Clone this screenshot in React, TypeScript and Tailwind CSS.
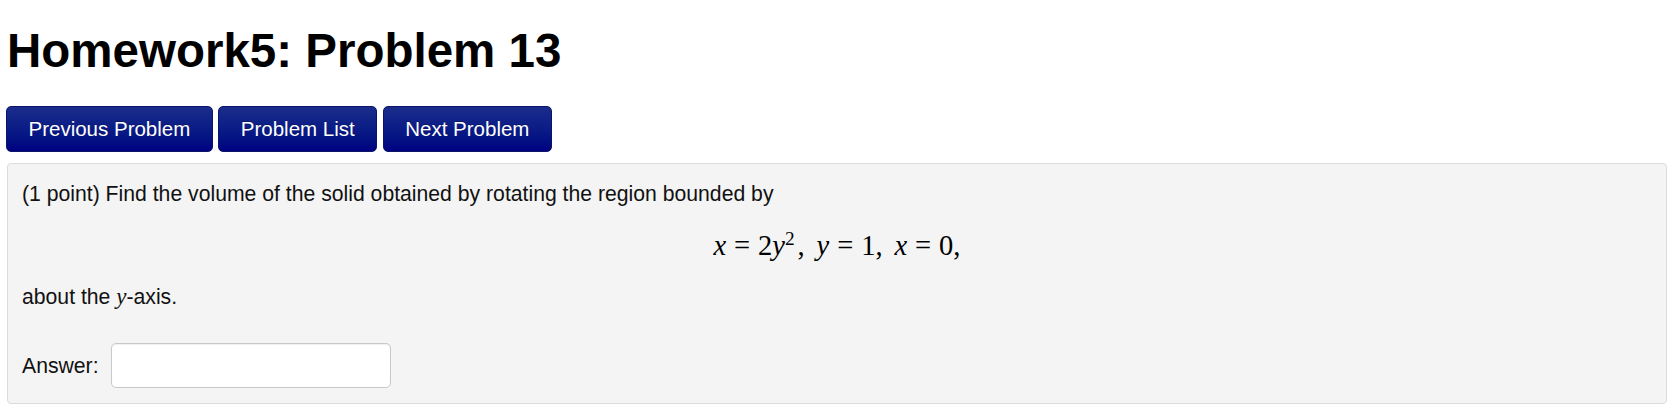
export default function App() {
  const btn =
    "h-[46px] px-[21.5px] rounded-[5px] border border-[#0b1466] bg-gradient-to-b from-[#1b2c8c] to-[#000080] text-white text-[20.5px] leading-none [text-shadow:0_-1px_0_rgba(0,0,0,0.25)]";

  return (
    <div className="min-h-screen bg-white text-[#111] font-['Liberation_Sans',Arial,sans-serif]">
      <h1 className="ml-[7px] pt-[27px] text-[47.5px] leading-[48px] font-bold text-black">
        Homework5: Problem 13
      </h1>

      <div className="ml-[6px] mt-[31px] flex gap-[5.5px]">
        <button className={btn}>Previous Problem</button>
        <button className={btn}>Problem List</button>
        <button className={btn}>Next Problem</button>
      </div>

      {/* problem body */}
      <div className="ml-[7px] mr-[9px] mt-[11px] rounded-[4px] border border-[#dcdcdc] bg-[#f4f4f4] px-[14px] pt-[15px] pb-[15px] text-[21.2px]">
        <p className="leading-[30px]">
          (1 point) Find the volume of the solid obtained by rotating the region bounded by
        </p>

        <div className="mt-[19px] flex justify-center font-['Liberation_Serif',serif] text-[28.5px] leading-[36px] text-black">
          <span className="whitespace-nowrap">
            <i>x</i>
            <span className="mx-[0.278em]">=</span>2<i>y</i>
            <sup className="relative -top-[0.5em] align-baseline text-[0.68em]">2</sup>
            <span className="ml-[0.1em]">,</span>
            <span className="ml-[0.42em]" />
            <i>y</i>
            <span className="mx-[0.278em]">=</span>1,
            <span className="ml-[0.42em]" />
            <i>x</i>
            <span className="mx-[0.278em]">=</span>0,
          </span>
        </div>

        <p className="mt-[18px] leading-[30px]">
          about the <i className="font-['Liberation_Serif',serif] text-[23px]">y</i>-axis.
        </p>

        <div className="mt-[31px] flex items-center gap-[12px]">
          <span className="leading-[30px]">Answer:</span>
          <input
            type="text"
            className="h-[45px] w-[280px] rounded-[5px] border border-[#c8c8c8] bg-white px-2 shadow-[inset_0_1px_1px_rgba(0,0,0,0.06)] outline-none"
          />
        </div>
      </div>
    </div>
  );
}
